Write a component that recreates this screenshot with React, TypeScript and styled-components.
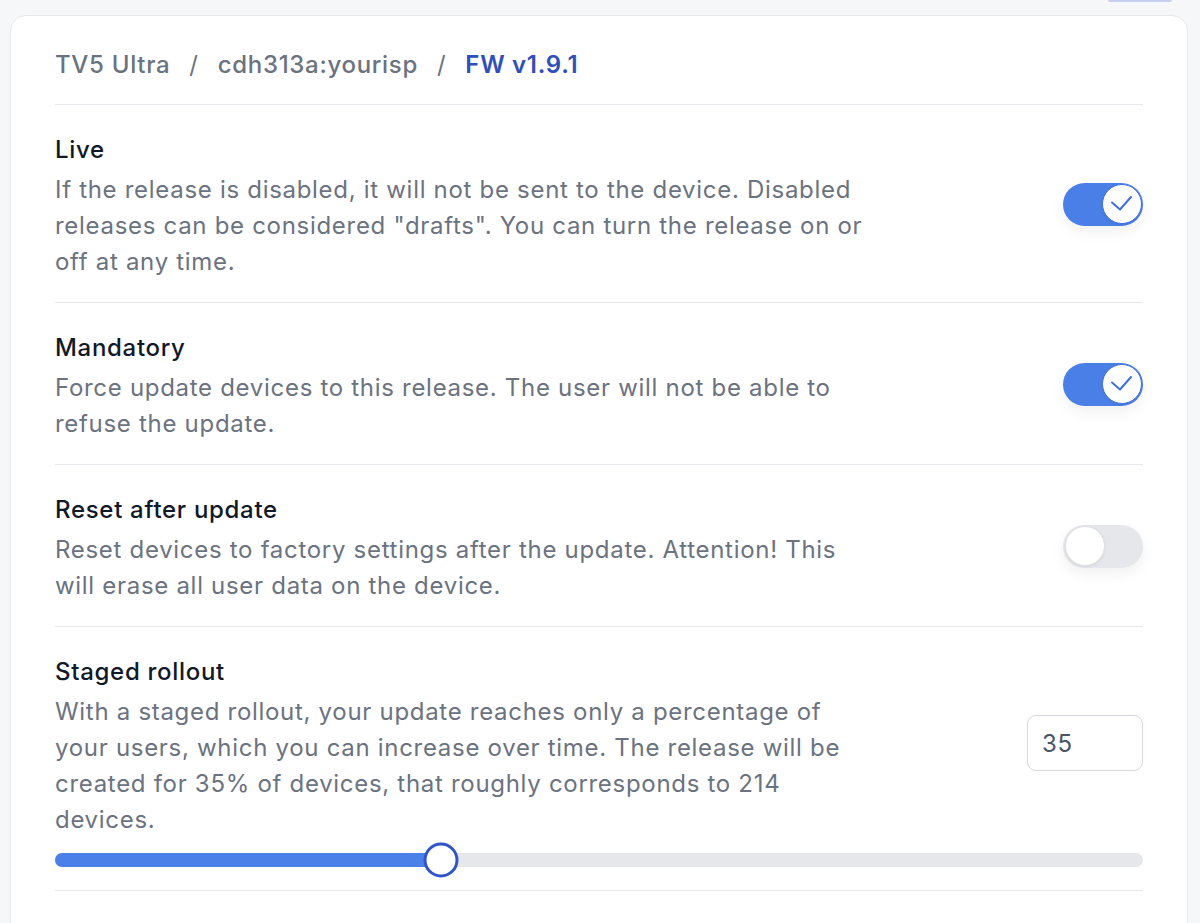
import React, { useState } from 'react';
import styled, { createGlobalStyle } from 'styled-components';

const GlobalStyle = createGlobalStyle`
    * {
        box-sizing: border-box;
    }

    body {
        margin: 0;
        background-color: #f6f7f9;
        font-family: Inter, "Noto Sans", "Liberation Sans", sans-serif;
        -webkit-font-smoothing: antialiased;
    }
`;

type SettingProps = {
    title: string;
    description: string;
    children?: React.ReactNode;
};

function Setting({ title, description, children }: SettingProps) {
    return (
        <SettingRow>
            <SettingText>
                <SettingTitle>{title}</SettingTitle>
                <SettingDescription>{description}</SettingDescription>
            </SettingText>
            {children}
        </SettingRow>
    );
}

function Toggle({ on, onChange }: { on: boolean; onChange: (v: boolean) => void }) {
    return (
        <ToggleTrack type="button" $on={on} onClick={() => onChange(!on)} aria-pressed={on}>
            <ToggleKnob $on={on}>
                {on && (
                    <svg width="38" height="38" viewBox="0 0 38 38" fill="none">
                        <polyline
                            points="9,17.5 17,24.5 28,12"
                            stroke="#3f6fdc"
                            strokeWidth="2"
                            strokeLinecap="round"
                            strokeLinejoin="round"
                        />
                    </svg>
                )}
            </ToggleKnob>
        </ToggleTrack>
    );
}

export default function App() {
    const [live, setLive] = useState(true);
    const [mandatory, setMandatory] = useState(true);
    const [reset, setReset] = useState(false);
    const [percent, setPercent] = useState(35);

    const thumbLeft = `calc(17px + (100% - 34px) * ${percent / 100})`;

    return (
        <Page>
            <GlobalStyle />
            <TopBar>
                <TopButton />
            </TopBar>
            <Card>
                <Breadcrumb>
                    <Crumb>TV5 Ultra</Crumb>
                    <Slash>/</Slash>
                    <Crumb>cdh313a:yourisp</Crumb>
                    <Slash>/</Slash>
                    <Crumb $active>FW v1.9.1</Crumb>
                </Breadcrumb>

                <Setting
                    title="Live"
                    description={'If the release is disabled, it will not be sent to the device. Disabled releases can be considered "drafts". You can turn the release on or off at any time.'}
                >
                    <Toggle on={live} onChange={setLive} />
                </Setting>

                <Setting
                    title="Mandatory"
                    description="Force update devices to this release. The user will not be able to refuse the update."
                >
                    <Toggle on={mandatory} onChange={setMandatory} />
                </Setting>

                <Setting
                    title="Reset after update"
                    description="Reset devices to factory settings after the update. Attention! This will erase all user data on the device."
                >
                    <Toggle on={reset} onChange={setReset} />
                </Setting>

                <RolloutSection>
                    <Setting
                        title="Staged rollout"
                        description={`With a staged rollout, your update reaches only a percentage of your users, which you can increase over time. The release will be created for ${percent}% of devices, that roughly corresponds to ${Math.round(percent * 6.12)} devices.`}
                    >
                        <PercentInput
                            value={percent}
                            onChange={(e) => setPercent(Math.max(0, Math.min(100, Number(e.target.value) || 0)))}
                        />
                    </Setting>
                    <SliderTrack>
                        <SliderFill style={{ width: thumbLeft }} />
                        <SliderThumb style={{ left: thumbLeft }} />
                    </SliderTrack>
                </RolloutSection>
            </Card>
        </Page>
    );
}

const Page = styled.div`
    min-height: 100vh;
    padding: 0 12px 0 10px;
`;

const TopBar = styled.div`
    height: 2px;
    display: flex;
    justify-content: flex-end;
    padding-right: 16px;
    overflow: hidden;
`;

const TopButton = styled.div`
    width: 64px;
    height: 2px;
    background-color: #c8cff3;
    border-radius: 0 0 6px 6px;
`;

const Card = styled.div`
    margin-top: 13px;
    min-height: 1000px;
    padding: 31px 44px 60px;
    background-color: #ffffff;
    border: 1px solid #e6e8ec;
    border-radius: 16px;
`;

const Breadcrumb = styled.div`
    display: flex;
    align-items: center;
    height: 36px;
    margin-bottom: 21px;
    font-size: 24px;
    line-height: 36px;
    letter-spacing: 0.7px;
`;

const Crumb = styled.span<{ $active?: boolean }>`
    color: ${(p) => (p.$active ? '#2f50b8' : '#6b7280')};
    font-weight: ${(p) => (p.$active ? 600 : 500)};
`;

const Slash = styled.span`
    color: #6b7280;
    margin: 0 19px;
`;

const SettingRow = styled.div`
    display: flex;
    align-items: center;
    justify-content: space-between;
    gap: 40px;
    padding: 27px 0 22px;
    border-top: 1px solid #e5e7eb;
`;

const SettingText = styled.div`
    max-width: 822px;
    display: flex;
    flex-direction: column;
    gap: 4px;
    letter-spacing: 0.7px;
`;

const SettingTitle = styled.div`
    font-size: 24px;
    line-height: 36px;
    font-weight: 500;
    color: #111827;
`;

const SettingDescription = styled.div`
    font-size: 24px;
    line-height: 36px;
    color: #6b7280;
`;

const ToggleTrack = styled.button<{ $on: boolean }>`
    flex-shrink: 0;
    width: 80px;
    height: 43px;
    margin-bottom: 4px;
    padding: 1.5px;
    display: flex;
    align-items: center;
    justify-content: ${(p) => (p.$on ? 'flex-end' : 'flex-start')};
    border: none;
    border-radius: 999px;
    background-color: ${(p) => (p.$on ? '#4a7fe8' : '#e5e7eb')};
    box-shadow: 0 6px 14px rgba(17, 24, 39, 0.06);
    cursor: pointer;
`;

const ToggleKnob = styled.span<{ $on: boolean }>`
    width: 40px;
    height: 40px;
    display: flex;
    align-items: center;
    justify-content: center;
    border-radius: 50%;
    background-color: #ffffff;
    border: 1px solid ${(p) => (p.$on ? '#3f6fdc' : '#dfe1e6')};
    box-shadow: 0 1px 3px rgba(17, 24, 39, 0.08);
`;

const RolloutSection = styled.div`
    padding-bottom: 23px;
    border-bottom: 1px solid #e5e7eb;
`;

const PercentInput = styled.input`
    flex-shrink: 0;
    width: 116px;
    height: 56px;
    margin-bottom: 6px;
    padding: 0 14px;
    border: 1px solid #d5d8de;
    border-radius: 9px;
    font-family: Inter, "Noto Sans", "Liberation Sans", sans-serif;
    font-size: 24px;
    letter-spacing: 0.7px;
    color: #4b5563;
    background-color: #ffffff;
    outline: none;
`;

const SliderTrack = styled.div`
    position: relative;
    height: 14px;
    margin-top: -7px;
    border-radius: 7px;
    background-color: #e5e7eb;
`;

const SliderFill = styled.div`
    height: 100%;
    border-radius: 7px 0 0 7px;
    background-color: #4a80e8;
`;

const SliderThumb = styled.div`
    position: absolute;
    top: 50%;
    width: 35px;
    height: 35px;
    transform: translate(-50%, -50%);
    border-radius: 50%;
    background-color: #ffffff;
    border: 3px solid #2f55c9;
`;
